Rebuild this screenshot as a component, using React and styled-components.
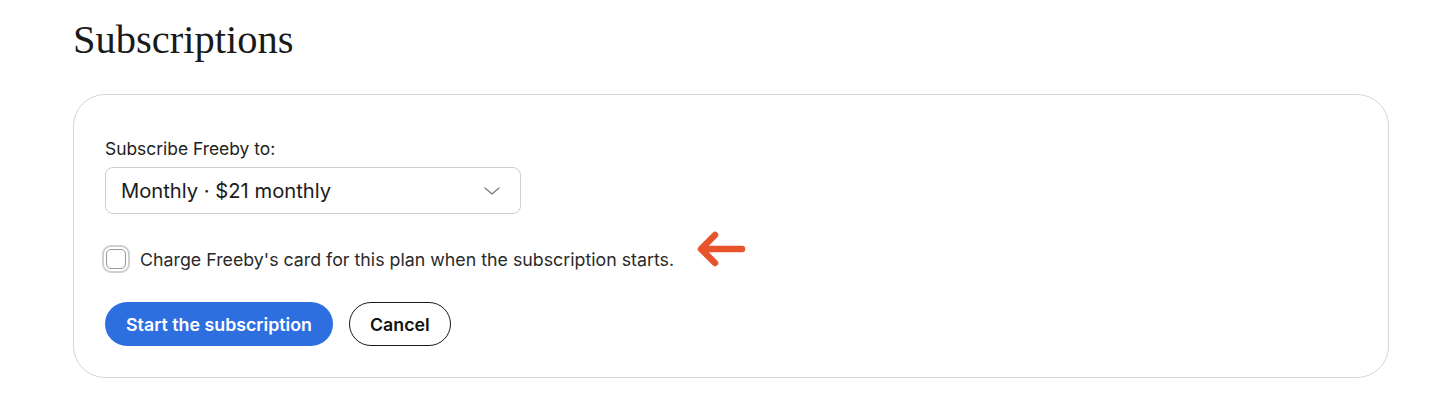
import React from 'react'
import styled, { createGlobalStyle } from 'styled-components'

const GlobalStyle = createGlobalStyle`
  body {
    margin: 0;
    background: #fff;
    font-family: Inter, "Liberation Sans", sans-serif;
    color: #1f1f1f;
  }
`

const Page = styled.div`
  padding: 16px 51px 0 73px;
`

const Title = styled.h1`
  margin: 0 0 30px;
  font-family: "Liberation Serif", serif;
  font-weight: 400;
  font-size: 40.5px;
  line-height: 48px;
  color: #1a1a1a;
`

const Card = styled.div`
  border: 1px solid #d6d6d6;
  border-radius: 32px;
  padding: 41px 31px 31px;
  display: flex;
  flex-direction: column;
  align-items: flex-start;
`

const Label = styled.label`
  font-size: 17.4px;
  line-height: 25px;
  color: #222;
`

const Select = styled.div`
  margin-top: 6px;
  width: 416px;
  height: 47px;
  box-sizing: border-box;
  border: 1px solid #cfcfcf;
  border-radius: 8px;
  padding: 0 20px 0 15px;
  display: flex;
  align-items: center;
  justify-content: space-between;
  font-size: 20.2px;
  color: #1c1c1c;
`

const CheckRow = styled.div`
  margin-top: 31px;
  display: flex;
  align-items: center;
  height: 28px;
`

const Box = styled.span`
  width: 20px;
  height: 20px;
  margin-left: 1px;
  box-sizing: border-box;
  border: 1px solid #9a9a9a;
  border-radius: 5px;
  box-shadow: 0 0 0 2px #fff, 0 0 0 4px #cfcfcf;
`

const CheckText = styled.span`
  margin-left: 14px;
  font-size: 17.8px;
  color: #2a2a2a;
`

const Arrow = styled.svg`
  margin-left: 22px;
  margin-bottom: 20px;
`

const Actions = styled.div`
  margin-top: 29px;
  display: flex;
  gap: 16px;
`

const Button = styled.button`
  height: 44px;
  border-radius: 22px;
  font-family: Inter, "Liberation Sans", sans-serif;
  font-size: 17.8px;
  font-weight: 600;
  padding: 0 ${p => (p.$primary ? '21px' : '20px')};
  border: ${p => (p.$primary ? 'none' : '1.5px solid #1a1a1a')};
  background: ${p => (p.$primary ? '#2e6fe0' : '#fff')};
  color: ${p => (p.$primary ? '#fff' : '#111')};
  cursor: pointer;
`

const App = () => {
  return (
    <Page>
      <GlobalStyle />
      <Title>Subscriptions</Title>
      <Card>
        <Label>Subscribe Freeby to:</Label>
        <Select>
          <span>Monthly · $21 monthly</span>
          <svg width="16" height="8" viewBox="0 0 16 8" fill="none">
            <polyline points="1,1 8,7 15,1" stroke="#7a7a7a" strokeWidth="1.3" strokeLinecap="round" strokeLinejoin="round" />
          </svg>
        </Select>
        <CheckRow>
          <Box />
          <CheckText>Charge Freeby's card for this plan when the subscription starts.</CheckText>
          <Arrow width="50" height="38" viewBox="0 0 50 38" fill="none">
            <path d="M46 19H6M19 5L5 19l14 14" stroke="#e9532b" strokeWidth="6.5" strokeLinecap="round" strokeLinejoin="round" />
          </Arrow>
        </CheckRow>
        <Actions>
          <Button $primary>Start the subscription</Button>
          <Button>Cancel</Button>
        </Actions>
      </Card>
    </Page>
  )
}

export default App
